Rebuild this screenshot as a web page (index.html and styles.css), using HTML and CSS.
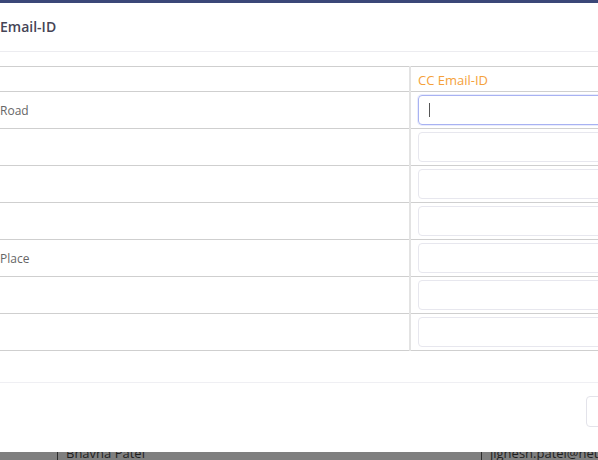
FILE: index.html
```html
<!DOCTYPE html>
<html>
<head>
<meta charset="utf-8">
<link rel="stylesheet" href="styles.css">
</head>
<body>
<div class="page">
  <div class="modal">
    <div class="modal-header"><h4 class="title">Email-ID</h4></div>
    <div class="modal-body">
      <table class="grid">
        <thead>
          <tr><th class="name-col"></th><th class="cc-col">CC Email-ID</th></tr>
        </thead>
        <tbody>
          <tr><td class="name-col">Road</td><td class="cc-col"><div class="field focused"><span class="caret"></span></div></td></tr>
          <tr><td class="name-col"></td><td class="cc-col"><div class="field"></div></td></tr>
          <tr><td class="name-col"></td><td class="cc-col"><div class="field"></div></td></tr>
          <tr><td class="name-col"></td><td class="cc-col"><div class="field"></div></td></tr>
          <tr><td class="name-col">Place</td><td class="cc-col"><div class="field"></div></td></tr>
          <tr><td class="name-col"></td><td class="cc-col"><div class="field"></div></td></tr>
          <tr><td class="name-col"></td><td class="cc-col"><div class="field"></div></td></tr>
        </tbody>
      </table>
    </div>
    <div class="modal-footer"><button class="btn" type="button"></button></div>
  </div>
  <div class="backdrop">
    <div class="behind-row">
      <span class="behind-cell first"></span>
      <span class="behind-cell name">Bhavna Patel</span>
      <span class="behind-cell mail">jignesh.patel@netclues.com</span>
    </div>
  </div>
</div>
</body>
</html>
```

FILE: styles.css
```css
html, body {
  margin: 0;
  padding: 0;
  overflow: hidden;
  width: 598px;
  height: 460px;
  background: #7f7f7f;
  font-family: "Open Sans", "Liberation Sans", sans-serif;
}
.page {
  width: 598px;
  height: 460px;
  overflow: hidden;
}
.modal {
  width: 660px;
  background: #ffffff;
  border-top: 3px solid #3b4778;
}
.modal-header {
  padding: 14px 0 14px 0;
  border-bottom: 1px solid #ececf0;
}
.title {
  margin: 0;
  font-size: 14px;
  line-height: 20px;
  font-weight: 600;
  color: #454556;
}
.modal-body {
  padding: 14px 0 31px 0;
}
.grid {
  width: 660px;
  border-collapse: collapse;
  table-layout: fixed;
}
.grid th, .grid td {
  padding: 0;
  border-top: 1px solid #cfcfcf;
  border-bottom: 1px solid #cfcfcf;
}
.grid th {
  height: 23px;
  text-align: left;
  font-weight: 400;
}
.grid td {
  height: 36px;
}
.name-col {
  width: 409px;
  font-size: 12px;
  color: #666;
  vertical-align: middle;
}
.cc-col {
  border-left: 2px solid #e3e3e3;
  padding-left: 7px !important;
}
th.cc-col {
  font-size: 13px;
  color: #f5a13a;
  padding-top: 1px !important;
}
.field {
  height: 28px;
  margin: 2px 0 2px 0;
  border: 1px solid #e7e7ee;
  border-radius: 4px;
  display: flex;
  align-items: center;
  padding-left: 10px;
}
.field.focused {
  border-color: #a8b2f2;
  box-shadow: 0 0 0 1px rgba(168, 178, 242, 0.25);
}
.caret {
  display: inline-block;
  width: 1px;
  height: 14px;
  background: #555;
}
.modal-footer {
  border-top: 1px solid #efeff3;
  height: 70px;
  padding-top: 13px;
  padding-left: 586px;
  box-sizing: border-box;
}
.btn {
  display: block;
  width: 60px;
  height: 31px;
  border: 1px solid #e3e3ea;
  border-radius: 4px;
  background: #fff;
  padding: 0;
}
.backdrop {
  height: 8px;
  overflow: hidden;
  background: #7f7f7f;
}
.behind-row {
  display: flex;
  margin-top: -8px;
  height: 18px;
  font-size: 13px;
  line-height: 18px;
  color: #1f1f1f;
}
.behind-cell {
  display: block;
  flex-shrink: 0;
  box-sizing: border-box;
  height: 18px;
}
.behind-cell.first {
  width: 58px;
  border-right: 1px solid #2d2d2d;
}
.behind-cell.name {
  width: 424px;
  padding-left: 8px;
  border-right: 1px solid #2d2d2d;
}
.behind-cell.mail {
  padding-left: 8px;
  white-space: nowrap;
}
```
